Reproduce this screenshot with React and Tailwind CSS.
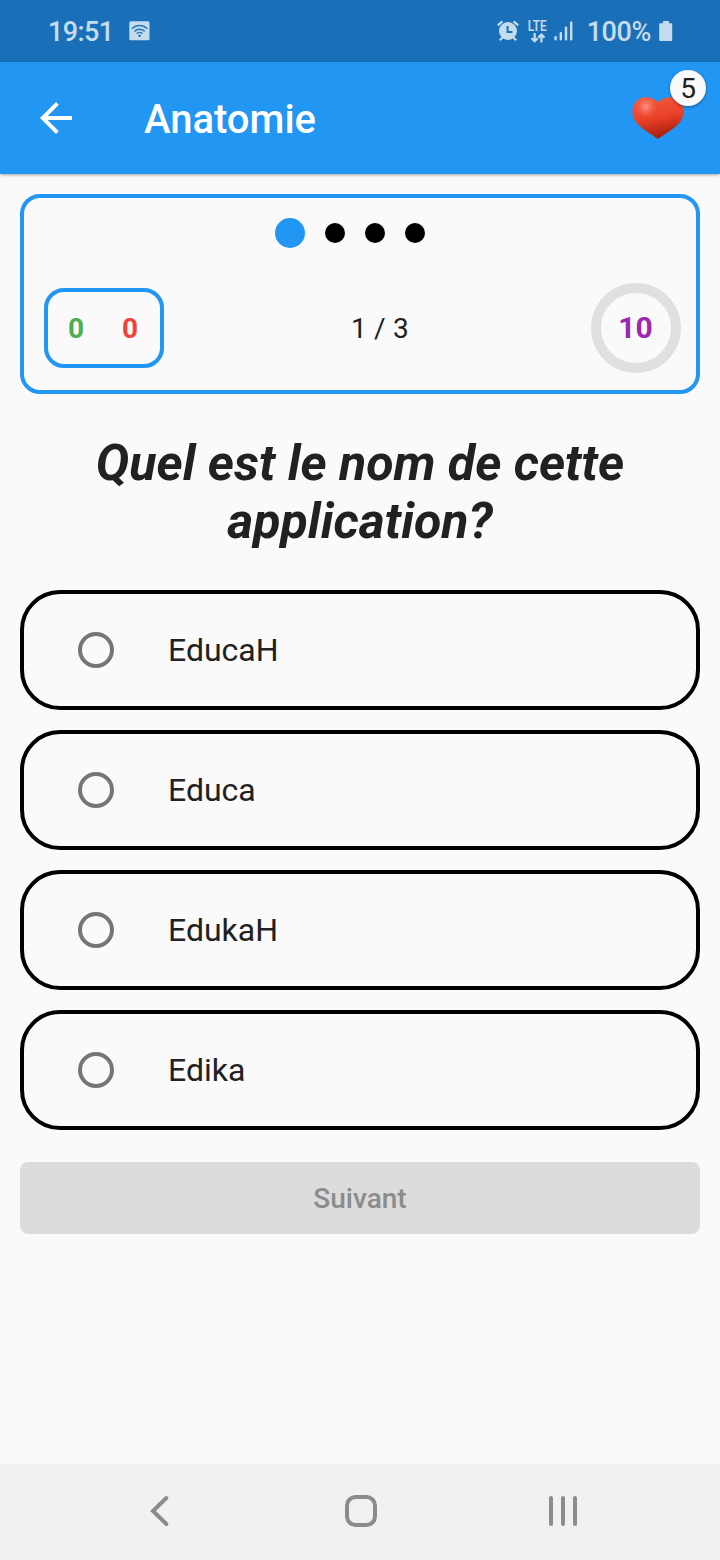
function CastIcon() {
  return (
    <svg className="ml-[15px] h-5 w-[22px]" viewBox="0 0 22 20" fill="none">
      <rect x="0.3" y="0.3" width="20.2" height="19" rx="1.6" fill="#c5dbee" />
      <g stroke="#2a77b9" strokeWidth="1.5">
        <path d="M3 7.8a10.6 10.6 0 0 1 15.2 0" />
        <path d="M5.4 10.4a7.2 7.2 0 0 1 10.4 0" />
        <path d="M7.8 12.7a4 4 0 0 1 5.6 0" />
      </g>
      <circle cx="10.6" cy="14.8" r="1.3" fill="#2a77b9" />
    </svg>
  );
}

function AlarmIcon() {
  return (
    <svg className="h-[22px] w-[22px]" viewBox="0 0 22 22" fill="none">
      <g stroke="#c5dbee" strokeWidth="2.2">
        <path d="M0.8 5.4 5.4 1.4" />
        <path d="M16.6 1.4 21.2 5.4" />
        <path d="M5.6 17.5 2.8 20.3" />
        <path d="M16.4 17.5 19.2 20.3" />
      </g>
      <circle cx="11" cy="11" r="9" fill="#c5dbee" />
      <path d="M10.6 6v6h4.8" stroke="#1a70b8" strokeWidth="2" />
    </svg>
  );
}

function LteIcon() {
  return (
    <div className="ml-[9px] flex w-5 flex-col items-center">
      <span className="scale-x-[0.84] text-[14px] leading-[13px] font-semibold">LTE</span>
      <svg className="h-[10px] w-[14px]" viewBox="0 0 14 10" fill="none" stroke="#c5dbee" strokeWidth="2.2">
        <path d="M3.7 0v8.3M0.6 5.2l3.1 3.1 3.1-3.1" />
        <path d="M10.4 9.5V1.5M7.3 4.600l3.1-3.1 3.1 3.1" />
      </svg>
    </div>
  );
}

function SignalIcon() {
  return (
    <svg className="ml-[6px] h-5 w-[19px]" viewBox="0 0 19 20" fill="#c5dbee">
      <rect x="0.4" y="15" width="2.4" height="4.4" rx="1" />
      <rect x="5.6" y="11" width="2.4" height="8.4" rx="1" />
      <rect x="10.8" y="5.6" width="2.4" height="13.8" rx="1" />
      <rect x="16" y="0.6" width="2.4" height="18.8" rx="1" />
    </svg>
  );
}

function BatteryIcon() {
  return (
    <svg className="ml-[8px] h-[22px] w-[14px]" viewBox="0 0 14 22" fill="#c5dbee">
      <path d="M4 1h6v2.2h2.2a1 1 0 0 1 1 1v15.900a1 1 0 0 1-1 1H1.200a1 1 0 0 1-1-1V4.200a1 1 0 0 1 1-1H4z" />
    </svg>
  );
}

function StatusBar() {
  return (
    <div className="flex h-[62px] items-center justify-between bg-[#1a70b8] pr-[47px] pl-[48px] text-[#c5dbee]">
      <div className="flex items-center">
        <span className="pt-[2px] text-[27px] leading-8 font-medium tracking-[-0.6px]">19:51</span>
        <CastIcon />
      </div>
      <div className="flex items-center">
        <AlarmIcon />
        <LteIcon />
        <SignalIcon />
        <span className="ml-[14px] pt-[2px] text-[27px] leading-8 font-medium tracking-[-0.4px]">100%</span>
        <BatteryIcon />
      </div>
    </div>
  );
}

function Heart() {
  return (
    <svg className="h-[43px] w-[52px]" viewBox="0 0 52 43">
      <defs>
        <linearGradient id="heartBase" x1="0.3" y1="0" x2="0.55" y2="1">
          <stop offset="0" stopColor="#f2573f" />
          <stop offset="0.5" stopColor="#ea4127" />
          <stop offset="0.75" stopColor="#c52d17" />
          <stop offset="1" stopColor="#a01f0d" />
        </linearGradient>
        <radialGradient id="heartShine" cx="14" cy="9.5" r="12" gradientUnits="userSpaceOnUse">
          <stop offset="0" stopColor="#ff9382" />
          <stop offset="0.4" stopColor="#fa7461" stopOpacity="0.75" />
          <stop offset="1" stopColor="#f2573f" stopOpacity="0" />
        </radialGradient>
      </defs>
      <path d="M26 5.3C22.5 1.8 18.5.2 14 .2 6 .2.4 6.6.4 14.4c0 13.2 14 18.8 25.6 27.6C37.6 33.2 51.6 27.6 51.6 14.4 51.6 6.6 46 .2 38 .2 33.5.2 29.5 1.8 26 5.3z" fill="url(#heartBase)" />
      <path d="M26 5.3C22.5 1.8 18.5.2 14 .2 6 .2.4 6.6.4 14.4c0 13.2 14 18.8 25.6 27.6z" fill="url(#heartShine)" />
    </svg>
  );
}

function AppBar() {
  return (
    <header className="flex h-28 items-center bg-[#2196f3] pr-9 pl-8 text-white shadow-[0_1px_3px_rgba(0,0,0,0.35)]">
      <svg className="h-12 w-12" viewBox="0 0 24 24" fill="currentColor">
        <path d="M20 11H7.83l5.59-5.59L12 4l-8 8 8 8 1.41-1.41L7.83 13H20v-2z" />
      </svg>
      <h1 className="ml-16 pt-[3px] text-[40px] leading-[48px] font-medium">Anatomie</h1>
      <div className="relative ml-auto">
        <Heart />
        <span className="absolute -top-[27px] left-[38px] flex h-9 w-9 items-center justify-center rounded-full bg-[#fafafa] pt-[2px] text-[28px] leading-[34px] text-[#212121] shadow-[0_1px_3px_rgba(0,0,0,0.4)]">
          5
        </span>
      </div>
    </header>
  );
}

function ScoreCard() {
  return (
    <section className="h-[200px] rounded-[20px] border-4 border-[#2196f3] pt-5">
      <div className="flex items-center justify-center gap-5 pr-5">
        <span className="h-[30px] w-[30px] rounded-full bg-[#2196f3]" />
        <span className="h-5 w-5 rounded-full bg-black" />
        <span className="h-5 w-5 rounded-full bg-black" />
        <span className="h-5 w-5 rounded-full bg-black" />
      </div>
      <div className="mt-[35px] flex items-center justify-between pr-[15px] pl-5">
        <div className="flex h-20 w-[120px] items-center justify-between rounded-[20px] border-4 border-[#2196f3] px-5 pt-[2px] text-[28px] leading-8 font-bold">
          <span className="text-[#4caf50]">0</span>
          <span className="pr-[2px] text-[#f44336]">0</span>
        </div>
        <span className="pt-[2px] pl-[5px] text-[28px] leading-8 tracking-[0.2px]">1 / 3</span>
        <div className="flex h-[90px] w-[90px] items-center justify-center rounded-full border-[10px] border-[#e0e0e0] pr-[1px] text-[30px] leading-8 font-bold text-[#9c27b0]">
          10
        </div>
      </div>
    </section>
  );
}

function Option({ label }) {
  return (
    <button type="button" className="flex h-[120px] items-center rounded-[40px] border-4 border-black pl-[54px] text-left">
      <span className="h-9 w-9 rounded-full border-4 border-[#757575]" />
      <span className="ml-[54px] text-[32px] leading-10">{label}</span>
    </button>
  );
}

function NavBar() {
  return (
    <nav className="mt-auto flex h-24 items-center bg-[#f1f1f1] pb-[2px] pl-[149px]">
      <svg className="h-8 w-5" viewBox="0 0 20 32" fill="none" stroke="#8c8c8c" strokeWidth="4" strokeLinecap="round">
        <path d="M17.3 3 4 16l13.3 13" />
      </svg>
      <svg className="ml-[176px] h-8 w-8" viewBox="0 0 32 32" fill="none" stroke="#8c8c8c" strokeWidth="4">
        <rect x="2" y="2" width="28" height="28" rx="8.5" />
      </svg>
      <svg className="ml-[172px] h-8 w-[30px]" viewBox="0 0 30 32" stroke="#8c8c8c" strokeWidth="4" strokeLinecap="round">
        <path d="M2 3v26M14 3v26M26 3v26" />
      </svg>
    </nav>
  );
}

const options = ["EducaH", "Educa", "EdukaH", "Edika"];

export default function App() {
  return (
    <div className="flex h-[1560px] w-[720px] flex-col overflow-hidden bg-[#fafafa] font-['Roboto',sans-serif] text-[#212121]">
      <StatusBar />
      <AppBar />
      <main className="flex flex-col px-5 pt-5">
        <ScoreCard />
        <h2 className="mt-10 text-center text-[50px] leading-[58px] font-bold italic">
          Quel est le nom de cette
          <br />
          application?
        </h2>
        <div className="mt-10 flex flex-col gap-5">
          {options.map((label) => (
            <Option key={label} label={label} />
          ))}
        </div>
        <button type="button" disabled className="mt-8 h-[72px] rounded-lg bg-[#dcdcdc] pt-[2px] text-[28px] leading-8 font-medium text-[#8c8c8c]">
          Suivant
        </button>
      </main>
      <NavBar />
    </div>
  );
}
